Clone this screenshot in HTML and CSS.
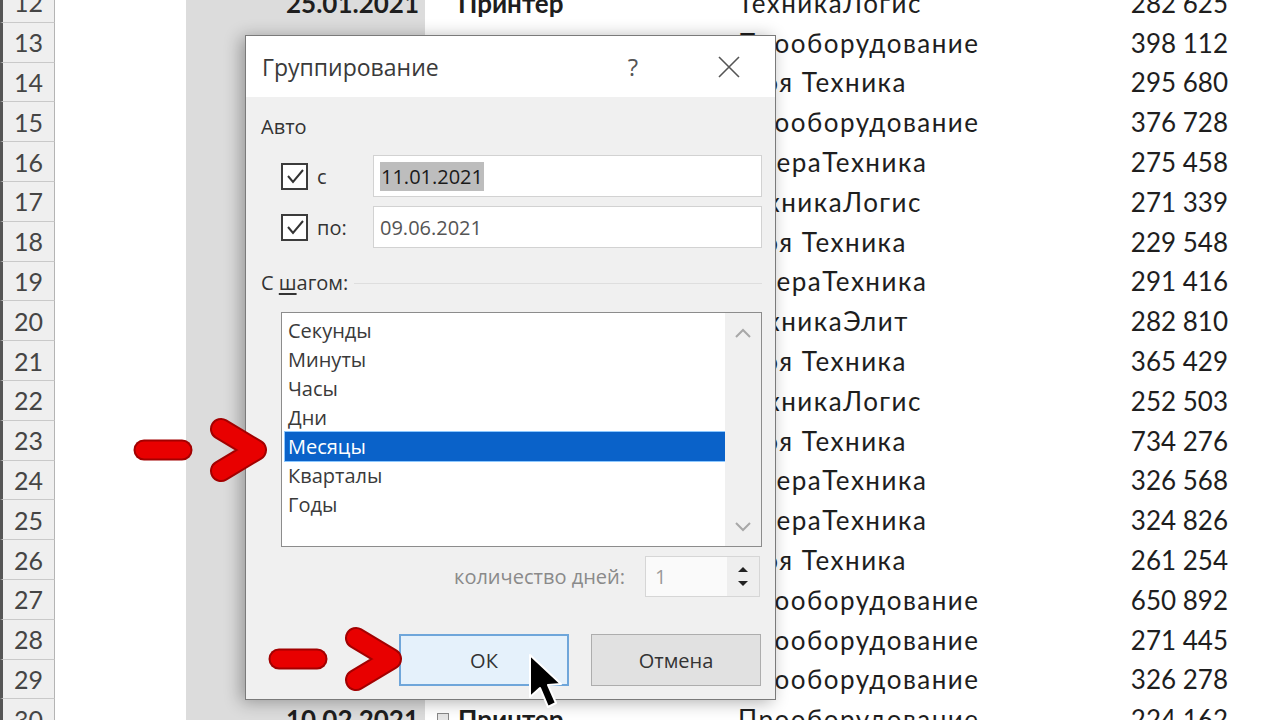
FILE: index.html
```html
<!DOCTYPE html>
<html lang="ru">
<head>
    <meta charset="UTF-8">
    <title>Группирование</title>
    <link rel="stylesheet" href="styles.css">
</head>
<body>
    <div class="sheet">
        <div class="row"><div class="rh">12</div><div class="cell"></div><div class="cell c-b">25.01.2021</div><div class="cell c-c">Принтер</div><div class="cell c-d">ТехникаЛогис</div><div class="cell c-e">282 625</div><div class="cell"></div></div>
        <div class="row"><div class="rh">13</div><div class="cell"></div><div class="cell c-b"></div><div class="cell c-c"></div><div class="cell c-d">Прооборудование</div><div class="cell c-e">398 112</div><div class="cell"></div></div>
        <div class="row"><div class="rh">14</div><div class="cell"></div><div class="cell c-b"></div><div class="cell c-c"></div><div class="cell c-d">Моя Техника</div><div class="cell c-e">295 680</div><div class="cell"></div></div>
        <div class="row"><div class="rh">15</div><div class="cell"></div><div class="cell c-b"></div><div class="cell c-c"></div><div class="cell c-d">Прооборудование</div><div class="cell c-e">376 728</div><div class="cell"></div></div>
        <div class="row"><div class="rh">16</div><div class="cell"></div><div class="cell c-b"></div><div class="cell c-c"></div><div class="cell c-d">СфераТехника</div><div class="cell c-e">275 458</div><div class="cell"></div></div>
        <div class="row"><div class="rh">17</div><div class="cell"></div><div class="cell c-b"></div><div class="cell c-c"></div><div class="cell c-d">ТехникаЛогис</div><div class="cell c-e">271 339</div><div class="cell"></div></div>
        <div class="row"><div class="rh">18</div><div class="cell"></div><div class="cell c-b"></div><div class="cell c-c"></div><div class="cell c-d">Моя Техника</div><div class="cell c-e">229 548</div><div class="cell"></div></div>
        <div class="row"><div class="rh">19</div><div class="cell"></div><div class="cell c-b"></div><div class="cell c-c"></div><div class="cell c-d">СфераТехника</div><div class="cell c-e">291 416</div><div class="cell"></div></div>
        <div class="row"><div class="rh">20</div><div class="cell"></div><div class="cell c-b"></div><div class="cell c-c"></div><div class="cell c-d">ТехникаЭлит</div><div class="cell c-e">282 810</div><div class="cell"></div></div>
        <div class="row"><div class="rh">21</div><div class="cell"></div><div class="cell c-b"></div><div class="cell c-c"></div><div class="cell c-d">Моя Техника</div><div class="cell c-e">365 429</div><div class="cell"></div></div>
        <div class="row"><div class="rh">22</div><div class="cell"></div><div class="cell c-b"></div><div class="cell c-c"></div><div class="cell c-d">ТехникаЛогис</div><div class="cell c-e">252 503</div><div class="cell"></div></div>
        <div class="row"><div class="rh">23</div><div class="cell"></div><div class="cell c-b"></div><div class="cell c-c"></div><div class="cell c-d">Моя Техника</div><div class="cell c-e">734 276</div><div class="cell"></div></div>
        <div class="row"><div class="rh">24</div><div class="cell"></div><div class="cell c-b"></div><div class="cell c-c"></div><div class="cell c-d">СфераТехника</div><div class="cell c-e">326 568</div><div class="cell"></div></div>
        <div class="row"><div class="rh">25</div><div class="cell"></div><div class="cell c-b"></div><div class="cell c-c"></div><div class="cell c-d">СфераТехника</div><div class="cell c-e">324 826</div><div class="cell"></div></div>
        <div class="row"><div class="rh">26</div><div class="cell"></div><div class="cell c-b"></div><div class="cell c-c"></div><div class="cell c-d">Моя Техника</div><div class="cell c-e">261 254</div><div class="cell"></div></div>
        <div class="row"><div class="rh">27</div><div class="cell"></div><div class="cell c-b"></div><div class="cell c-c"></div><div class="cell c-d">Прооборудование</div><div class="cell c-e">650 892</div><div class="cell"></div></div>
        <div class="row"><div class="rh">28</div><div class="cell"></div><div class="cell c-b"></div><div class="cell c-c"></div><div class="cell c-d">Прооборудование</div><div class="cell c-e">271 445</div><div class="cell"></div></div>
        <div class="row"><div class="rh">29</div><div class="cell"></div><div class="cell c-b"></div><div class="cell c-c"></div><div class="cell c-d">Прооборудование</div><div class="cell c-e">326 278</div><div class="cell"></div></div>
        <div class="row"><div class="rh">30</div><div class="cell"></div><div class="cell c-b">10.02.2021</div><div class="cell c-c c-flag"><span class="flag"></span>Принтер</div><div class="cell c-d">Прооборудование</div><div class="cell c-e">224 162</div><div class="cell"></div></div>
    </div>

    <!-- grouping dialog -->
    <div class="dialog">
        <div class="titlebar">
            <span class="title">Группирование</span>
            <span class="help">?</span>
            <span class="close">
                <svg width="24" height="24" viewBox="0 0 24 24"><path d="M2 2 L22 22 M22 2 L2 22" stroke="#555" stroke-width="1.6" fill="none"/></svg>
            </span>
        </div>
        <div class="dlg-body">
            <div class="group-label">Авто</div>
            <div class="date-row date-from">
                <span class="check"><svg width="22" height="22" viewBox="0 0 22 22"><polyline points="4,11 9,17 19,5" fill="none" stroke="#333" stroke-width="2"/></svg></span>
                <label class="date-label">с</label>
                <div class="field"><span class="sel">11.01.2021</span></div>
            </div>
            <div class="date-row date-to">
                <span class="check"><svg width="22" height="22" viewBox="0 0 22 22"><polyline points="4,11 9,17 19,5" fill="none" stroke="#333" stroke-width="2"/></svg></span>
                <label class="date-label">по:</label>
                <div class="field">09.06.2021</div>
            </div>
            <div class="step-label"><span>С <u>ш</u>агом:</span><span class="rule"></span></div>
            <div class="listbox">
                <ul class="items">
                    <li>Секунды</li>
                    <li>Минуты</li>
                    <li>Часы</li>
                    <li>Дни</li>
                    <li class="selected">Месяцы</li>
                    <li>Кварталы</li>
                    <li>Годы</li>
                </ul>
                <div class="scroll">
                    <svg width="18" height="11" viewBox="0 0 18 11"><polyline points="2,9 9,2 16,9" fill="none" stroke="#a8a8a8" stroke-width="2"/></svg>
                    <svg width="18" height="11" viewBox="0 0 18 11"><polyline points="2,2 9,9 16,2" fill="none" stroke="#a8a8a8" stroke-width="2"/></svg>
                </div>
            </div>
            <div class="days-row">
                <span class="days-label">количество дней:</span>
                <div class="spin">
                    <span class="spin-val">1</span>
                    <div class="spin-btns">
                        <span class="spin-up"></span>
                        <span class="spin-down"></span>
                    </div>
                </div>
            </div>
            <div class="buttons">
                <button class="btn btn-ok">ОК</button>
                <button class="btn">Отмена</button>
            </div>
        </div>
    </div>

    <!-- red pointers -->
    <svg class="mark mark-list" width="142" height="70" viewBox="0 0 142 70">
        <g fill="none" stroke-linecap="round" stroke-linejoin="round">
            <line x1="14" y1="35" x2="52" y2="35" stroke="#a30000" stroke-width="21"/>
            <polyline points="91,14 126,35 91,56" stroke="#a30000" stroke-width="22"/>
            <line x1="14" y1="35" x2="52" y2="35" stroke="#e80000" stroke-width="17"/>
            <polyline points="91,14 126,35 91,56" stroke="#e80000" stroke-width="18"/>
        </g>
    </svg>
    <svg class="mark mark-ok" width="142" height="70" viewBox="0 0 142 70">
        <g fill="none" stroke-linecap="round" stroke-linejoin="round">
            <line x1="14" y1="35" x2="52" y2="35" stroke="#a30000" stroke-width="21"/>
            <polyline points="91,14 126,35 91,56" stroke="#a30000" stroke-width="22"/>
            <line x1="14" y1="35" x2="52" y2="35" stroke="#e80000" stroke-width="17"/>
            <polyline points="91,14 126,35 91,56" stroke="#e80000" stroke-width="18"/>
        </g>
    </svg>

    <!-- mouse pointer -->
    <svg class="pointer" width="40" height="60" viewBox="0 0 40 60">
        <path d="M3 3 L3 45 L13 36 L21 55 L29 51 L21 33 L34 32 Z" fill="#000" stroke="#fff" stroke-width="2" stroke-linejoin="round"/>
    </svg>
</body>
</html>
```

FILE: styles.css
```css
body {
    margin: 0;
    width: 1280px;
    height: 720px;
    overflow: hidden;
    position: relative;
    background-color: #fff;
    font-family: 'Lato', 'Liberation Sans', sans-serif;
}

/* worksheet */
.sheet {
    margin-top: -17px;
}

.row {
    display: grid;
    grid-template-columns: 55px 131px 239px 313px 364px 130px 1fr;
    height: 39.8px;
}

.rh {
    box-sizing: border-box;
    display: flex;
    align-items: center;
    justify-content: center;
    background-color: #efefef;
    border-left: 3px solid #555;
    border-right: 1px solid #b4b4b4;
    border-bottom: 1px solid #c9c9c9;
    color: #454545;
    font-size: 25px;
}

.cell {
    display: flex;
    align-items: center;
    font-size: 26px;
    color: #1e1e1e;
    white-space: nowrap;
    overflow: hidden;
}

.c-b {
    background-color: #dcdcdc;
    justify-content: flex-end;
    padding-right: 6px;
    font-weight: 700;
}

.c-c {
    padding-left: 33px;
    font-weight: 700;
}

.c-flag {
    padding-left: 12px;
}

.flag {
    width: 10px;
    height: 10px;
    border: 1px solid #888;
    background-color: #e6e6e6;
    margin-right: 9px;
}

.c-d {
    letter-spacing: 1.5px;
}

.c-e {
    justify-content: flex-end;
    padding-right: 4px;
}

/* dialog window */
.dialog {
    position: absolute;
    left: 245px;
    top: 35px;
    width: 531px;
    height: 665px;
    box-sizing: border-box;
    border: 1px solid #7a7a7a;
    background-color: #f0f0f0;
    box-shadow: -4px 2px 16px rgba(0, 0, 0, 0.32);
    font-family: 'Open Sans', 'Noto Sans', sans-serif;
    color: #333;
    display: flex;
    flex-direction: column;
}

.titlebar {
    height: 61px;
    background-color: #fff;
    display: flex;
    align-items: center;
}

.title {
    margin-left: 16px;
    font-size: 23px;
    color: #3a3a3a;
}

.help {
    margin-left: auto;
    width: 40px;
    text-align: center;
    font-size: 24px;
    color: #555;
    margin-right: 52px;
}

.close {
    width: 48px;
    display: flex;
    justify-content: center;
    margin-right: 22px;
}

.dlg-body {
    padding: 0 13px 0 15px;
    font-size: 20px;
}

.group-label {
    margin-top: 19px;
    line-height: 22px;
}

.date-row {
    display: flex;
    align-items: center;
    height: 42px;
    padding-left: 20px;
}

.date-from {
    margin-top: 17px;
}

.date-to {
    margin-top: 9px;
}

.check {
    box-sizing: border-box;
    width: 27px;
    height: 27px;
    border: 2px solid #3c3c3c;
    background-color: #fff;
    display: flex;
    align-items: center;
    justify-content: center;
}

.date-label {
    margin-left: 9px;
    width: 56px;
}

.field {
    flex: 1;
    height: 100%;
    box-sizing: border-box;
    border: 1px solid #d2d2d2;
    background-color: #fff;
    padding-left: 6px;
    display: flex;
    align-items: center;
    color: #555;
}

.sel {
    background-color: #bdbdbd;
    color: #1a1a1a;
    padding: 1px 1px;
}

.step-label {
    margin-top: 24px;
    line-height: 22px;
    display: flex;
    align-items: center;
}

.step-label u {
    text-underline-offset: 3px;
}

.rule {
    flex: 1;
    height: 1px;
    margin-left: 6px;
    background-color: #dedede;
}

.listbox {
    margin-top: 18px;
    margin-left: 20px;
    height: 235px;
    box-sizing: border-box;
    border: 1px solid #8c8c8c;
    background-color: #fff;
    display: flex;
}

.items {
    flex: 1;
    list-style: none;
    margin: 0;
    padding: 3px 0 0 3px;
}

.items li {
    height: 29px;
    line-height: 29px;
    padding-left: 3px;
    color: #3a3a3a;
}

.items li.selected {
    background-color: #0a62c9;
    color: #fff;
    box-shadow: 0 0 0 1px #8cc8ff;
}

.scroll {
    width: 36px;
    background-color: #f0f0f0;
    display: flex;
    flex-direction: column;
    align-items: center;
    justify-content: space-between;
    padding: 15px 0 14px;
}

.days-row {
    margin-top: 9px;
    height: 41px;
    display: flex;
    align-items: center;
    justify-content: flex-end;
    padding-right: 2px;
}

.days-label {
    color: #8a8a8a;
    margin-right: 20px;
}

.spin {
    width: 115px;
    height: 100%;
    box-sizing: border-box;
    border: 1px solid #d6d6d6;
    background-color: #fafafa;
    display: flex;
}

.spin-val {
    flex: 1;
    padding-left: 9px;
    line-height: 39px;
    color: #9a9a9a;
}

.spin-btns {
    width: 32px;
    background-color: #eeeeee;
    display: flex;
    flex-direction: column;
    align-items: center;
    justify-content: center;
    gap: 9px;
}

.spin-up,
.spin-down {
    width: 0;
    height: 0;
    border-left: 5px solid transparent;
    border-right: 5px solid transparent;
}

.spin-up {
    border-bottom: 5px solid #222;
}

.spin-down {
    border-top: 5px solid #222;
}

.buttons {
    margin-top: 37px;
    display: flex;
    justify-content: flex-end;
    gap: 22px;
    padding-right: 1px;
}

.btn {
    width: 170px;
    height: 52px;
    box-sizing: border-box;
    border: 1px solid #adadad;
    background-color: #e1e1e1;
    font-family: 'Open Sans', 'Noto Sans', sans-serif;
    font-size: 20px;
    color: #333;
}

.btn-ok {
    border: 2px solid #6fa6da;
    background-color: #e5f1fb;
}

/* overlays */
.mark {
    position: absolute;
}

.mark-list {
    left: 130px;
    top: 415px;
}

.mark-ok {
    left: 265px;
    top: 624px;
}

.pointer {
    position: absolute;
    left: 527px;
    top: 652px;
}
```
